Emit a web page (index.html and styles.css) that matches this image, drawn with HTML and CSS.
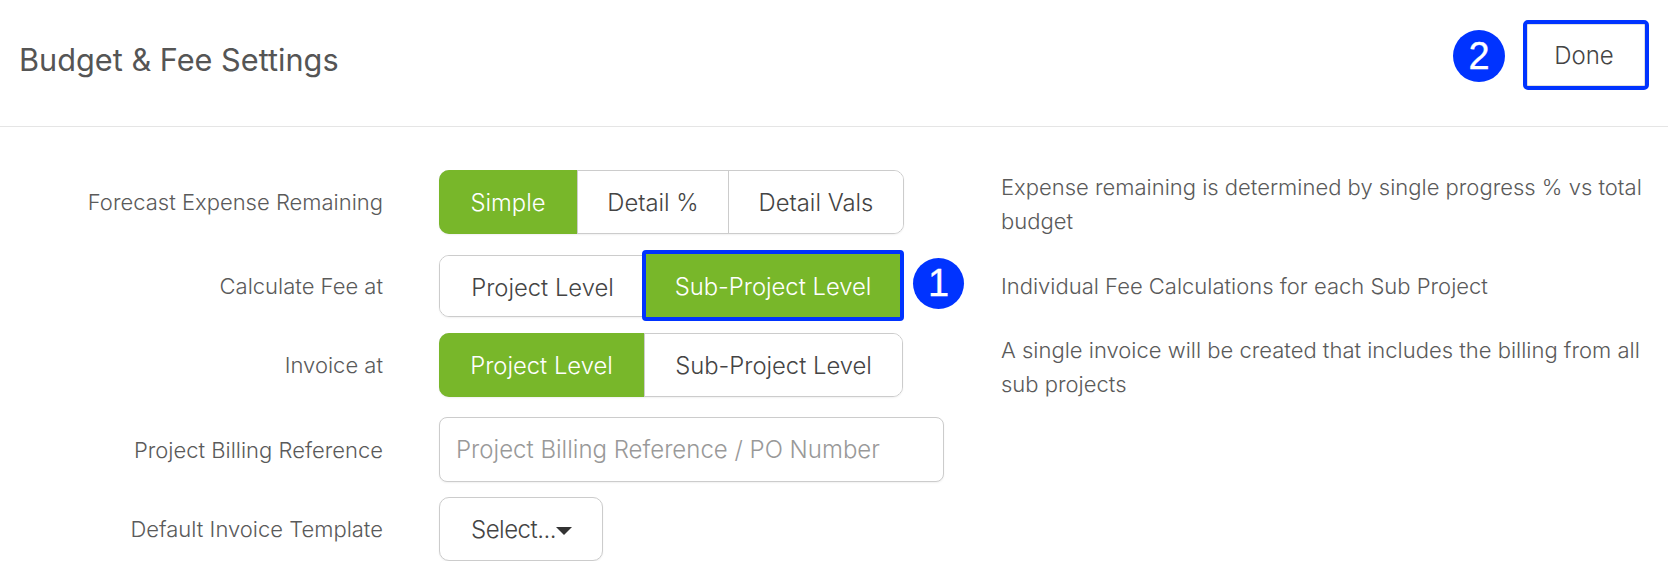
FILE: index.html
```html
<!DOCTYPE html>
<html lang="en">
<head>
<meta charset="utf-8">
<title>Budget &amp; Fee Settings</title>
<link rel="stylesheet" href="styles.css">
</head>
<body>
<header class="header">
  <h1 class="title">Budget &amp; Fee Settings</h1>
  <span class="marker">2</span>
  <button class="done" type="button">Done</button>
</header>
<main class="form">
  <div class="row row-loose">
    <label class="label">Forecast Expense Remaining</label>
    <div class="control">
      <div class="seg">
        <button class="seg-btn on w-simple" type="button">Simple</button>
        <button class="seg-btn w-pct" type="button">Detail %</button>
        <button class="seg-btn w-vals" type="button">Detail Vals</button>
      </div>
    </div>
    <p class="desc">Expense remaining is determined by single progress % vs total budget</p>
  </div>
  <div class="row">
    <label class="label">Calculate Fee at</label>
    <div class="control">
      <div class="seg seg-level">
        <button class="seg-btn w-project" type="button">Project Level</button>
        <button class="seg-btn on w-sub hl" type="button">Sub-Project Level</button>
        <span class="marker marker-over">1</span>
      </div>
    </div>
    <p class="desc desc-single">Individual Fee Calculations for each Sub Project</p>
  </div>
  <div class="row row-loose">
    <label class="label">Invoice at</label>
    <div class="control">
      <div class="seg">
        <button class="seg-btn on w-project" type="button">Project Level</button>
        <button class="seg-btn w-sub" type="button">Sub-Project Level</button>
      </div>
    </div>
    <p class="desc">A single invoice will be created that includes the billing from all sub projects</p>
  </div>
  <div class="row">
    <label class="label">Project Billing Reference</label>
    <div class="control">
      <input class="input" type="text" placeholder="Project Billing Reference / PO Number">
    </div>
  </div>
  <div class="row">
    <label class="label">Default Invoice Template</label>
    <div class="control">
      <button class="select" type="button">Select...<span class="caret"></span></button>
    </div>
  </div>
</main>
</body>
</html>
```
FILE: styles.css
```css
* { box-sizing: border-box; }
html, body { margin: 0; padding: 0; background: #fff; }
body {
  font-family: Inter, Roboto, "Liberation Sans", sans-serif;
  font-weight: 300;
  color: #444;
  overflow: hidden;
}
button, input { font: inherit; color: inherit; }

.header {
  display: flex;
  align-items: center;
  height: 127px;
  padding: 3px 19px 17px 19px;
  border-bottom: 1px solid #e5e5e5;
}
.title {
  margin: 6px auto 0 0;
  font-size: 30.7px;
  font-weight: 400;
  color: #555;
}
.marker {
  display: flex;
  align-items: center;
  justify-content: center;
  width: 52px;
  height: 52px;
  border-radius: 50%;
  background: #0033ff;
  color: #fff;
  font-size: 38px;
  font-weight: 400;
  font-family: "Liberation Sans", sans-serif;
  -webkit-text-stroke: 0.3px #fff;
}
.done {
  width: 126px;
  height: 70px;
  margin: -2px 0 0 18px;
  padding: 0 4px 0 0;
  border: 4px solid #0033ff;
  border-radius: 5px;
  background: #fff;
  box-shadow: inset 0 0 0 1px rgba(0, 0, 0, .12);
  font-size: 24px;
}

.form {
  display: flex;
  flex-direction: column;
  gap: 13px;
  padding: 41px 0 0 19px;
}
.row {
  display: grid;
  grid-template-columns: 364px 618px 645px;
  align-items: center;
  min-height: 64px;
}
.row-loose { margin-bottom: 5px; }
.row:nth-child(4) { margin-bottom: 2px; }
.label {
  text-align: right;
  font-size: 22px;
  color: #5a5a5a;
}
.control { padding-left: 56px; }
.desc {
  margin: 2px 0 -2px;
  font-size: 22px;
  line-height: 34px;
  color: #5a5a5a;
}
.desc-single { margin: 0; }

.seg {
  position: relative;
  display: inline-flex;
  height: 64px;
  border: 1px solid #ccc;
  border-radius: 10px;
  box-shadow: 0 1px 2px rgba(0, 0, 0, .06);
}
.seg-level { height: 62px; }
.seg-level .seg-btn { padding-top: 2px; }
.seg-btn {
  height: 100%;
  margin: 0;
  padding: 0;
  border: 0;
  background: #fff;
  font-size: 23.8px;
}
.seg-btn:first-child { border-radius: 9px 0 0 9px; }
.seg-btn:last-child { border-radius: 0 9px 9px 0; }
.seg-btn + .seg-btn { border-left: 1px solid #ccc; }
.seg-btn.on {
  margin: -1px 0;
  height: calc(100% + 2px);
  background: #78b72a;
  color: #fff;
  border-left: 0;
}
.seg-btn.on:first-child { margin-left: -1px; border-radius: 10px 0 0 10px; }
.w-simple { width: 138px; }
.w-pct { width: 151px; }
.w-vals { width: 175px; }
.w-project { width: 205px; }
.w-sub { width: 258px; }
.seg-btn.hl {
  position: relative;
  width: 262px;
  margin: -6px -2px -5px -3px;
  height: calc(100% + 11px);
  border: 4px solid #0033ff;
  border-radius: 4px;
}
.marker-over {
  position: absolute;
  left: 473px;
  top: 2px;
  width: 51px;
  height: 51px;
}

.input {
  display: block;
  width: 505px;
  height: 65px;
  padding: 0 16px;
  border: 1px solid #ccc;
  border-radius: 8px;
  outline: 0;
  font-size: 24px;
  box-shadow: 0 1px 2px rgba(0, 0, 0, .06);
}
.input::placeholder { color: #999; opacity: 1; }

.select {
  display: flex;
  align-items: center;
  width: 164px;
  height: 64px;
  padding: 0 0 0 31px;
  border: 1px solid #ccc;
  border-radius: 10px;
  background: #fff;
  font-size: 24px;
  letter-spacing: -0.5px;
  box-shadow: 0 1px 2px rgba(0, 0, 0, .06);
}
.caret {
  width: 0;
  height: 0;
  margin-top: 3px;
  border-top: 8px solid #333;
  border-left: 8px solid transparent;
  border-right: 8px solid transparent;
}
```
